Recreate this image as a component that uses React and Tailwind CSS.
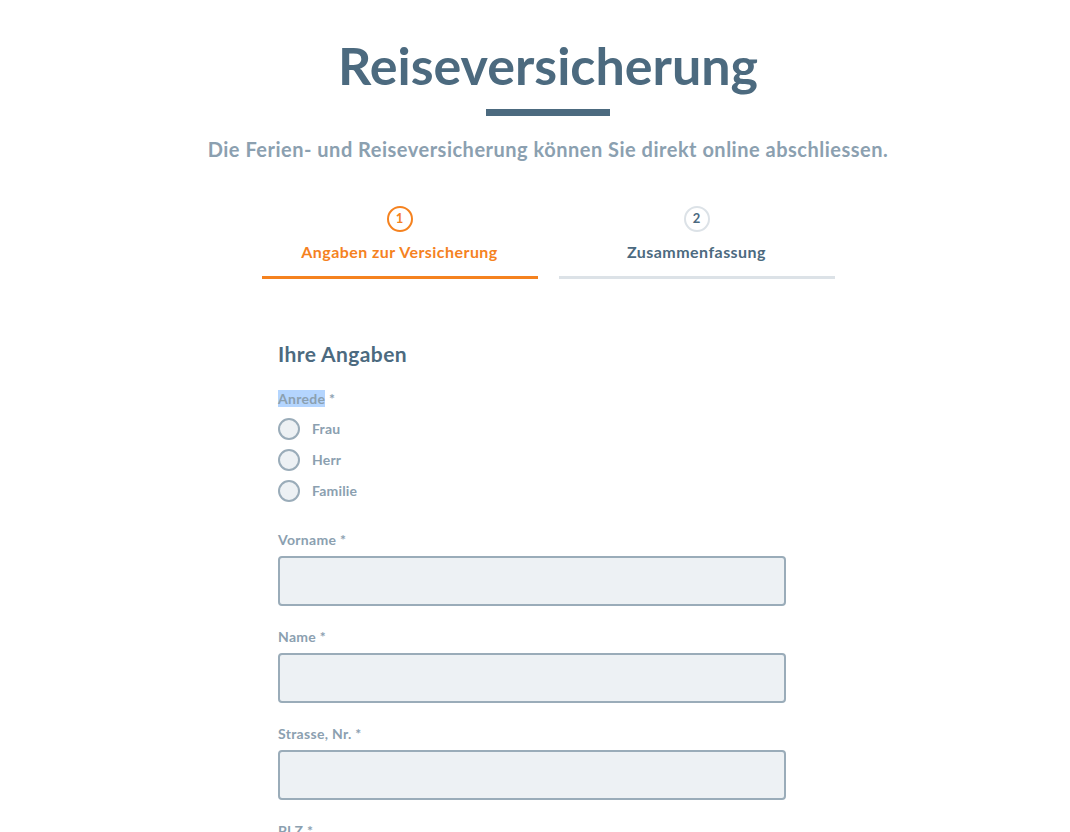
import React, { useState } from 'react';

// Travel insurance form, step 1 of 2
const steps = [
    { n: 1, label: 'Angaben zur Versicherung', active: true },
    { n: 2, label: 'Zusammenfassung', active: false },
];

const fields = ['Vorname', 'Name', 'Strasse, Nr.', 'PLZ'];

const App = () => {
    const [anrede, setAnrede] = useState('');

    return (
        <div className="min-h-screen bg-white pl-[26px] font-['Lato','Open_Sans',sans-serif]">
            {/* Header */}
            <div className="flex flex-col items-center pt-[33px]">
                <h1 className="text-[52px] leading-[64px] font-bold text-[#4c6a7f]">
                    Reiseversicherung
                </h1>
                <div className="mt-[12px] w-[124px] h-[7px] bg-[#4c6a7f]" />
                <p className="mt-[19px] text-[20px] leading-[28px] font-bold text-[#8ba0b0] tracking-[0.5px]">
                    Die Ferien- und Reiseversicherung können Sie direkt online abschliessen.
                </p>
            </div>

            {/* Stepper */}
            <div className="flex justify-center gap-[21px] mt-[43px]">
                {steps.map(s => (
                    <div key={s.n} className="w-[276px] flex flex-col items-center">
                        <div
                            className={`w-[26px] h-[26px] rounded-full border-2 flex items-center justify-center text-[13px] font-bold ${
                                s.active ? 'border-[#f5821f] text-[#f5821f]' : 'border-[#dce2e7] text-[#4c6a7f]'
                            }`}
                        >
                            {s.n}
                        </div>
                        <div
                            className={`mt-[10px] text-[16px] leading-[20px] font-bold tracking-[0.45px] ${
                                s.active ? 'text-[#f5821f]' : 'text-[#4c6a7f]'
                            }`}
                        >
                            {s.label}
                        </div>
                        <div className={`mt-[14px] w-full h-[3px] ${s.active ? 'bg-[#f5821f]' : 'bg-[#dce2e7]'}`} />
                    </div>
                ))}
            </div>

            {/* Form */}
            <div className="w-[508px] ml-[252px] mt-[63px]">
                <h2 className="text-[21px] leading-[24px] font-bold text-[#4c6a7f] tracking-[0.4px]">Ihre Angaben</h2>

                <div className="mt-[23px] text-[14px] leading-[20px] font-bold text-[#8ba0b0] tracking-[0.3px]">
                    <span className="bg-[#b4d5fe]">Anrede</span> *
                </div>
                <div className="mt-[9px] flex flex-col gap-[9px]">
                    {['Frau', 'Herr', 'Familie'].map(a => (
                        <label key={a} className="flex items-center gap-[12px] cursor-pointer">
                            <span
                                onClick={() => setAnrede(a)}
                                className="w-[22px] h-[22px] rounded-full border-2 border-[#9aacb9] bg-[#edf1f4] flex items-center justify-center"
                            >
                                {anrede === a && <span className="w-[10px] h-[10px] rounded-full bg-[#4c6a7f]" />}
                            </span>
                            <span className="text-[14px] leading-[20px] font-bold text-[#8ba0b0] tracking-[0.2px]">{a}</span>
                        </label>
                    ))}
                </div>

                <div className="mt-[28px] flex flex-col gap-[21px]">
                    {fields.map(f => (
                        <div key={f}>
                            <div className="text-[14px] leading-[20px] font-bold text-[#8ba0b0] tracking-[0.3px]">{f} *</div>
                            <input
                                type="text"
                                className="mt-[6px] w-full h-[50px] rounded-[4px] border-2 border-[#9aacb9] bg-[#edf1f4] px-3 text-[16px] text-[#4c6a7f] outline-none"
                            />
                        </div>
                    ))}
                </div>
            </div>
        </div>
    );
};

export default App;
